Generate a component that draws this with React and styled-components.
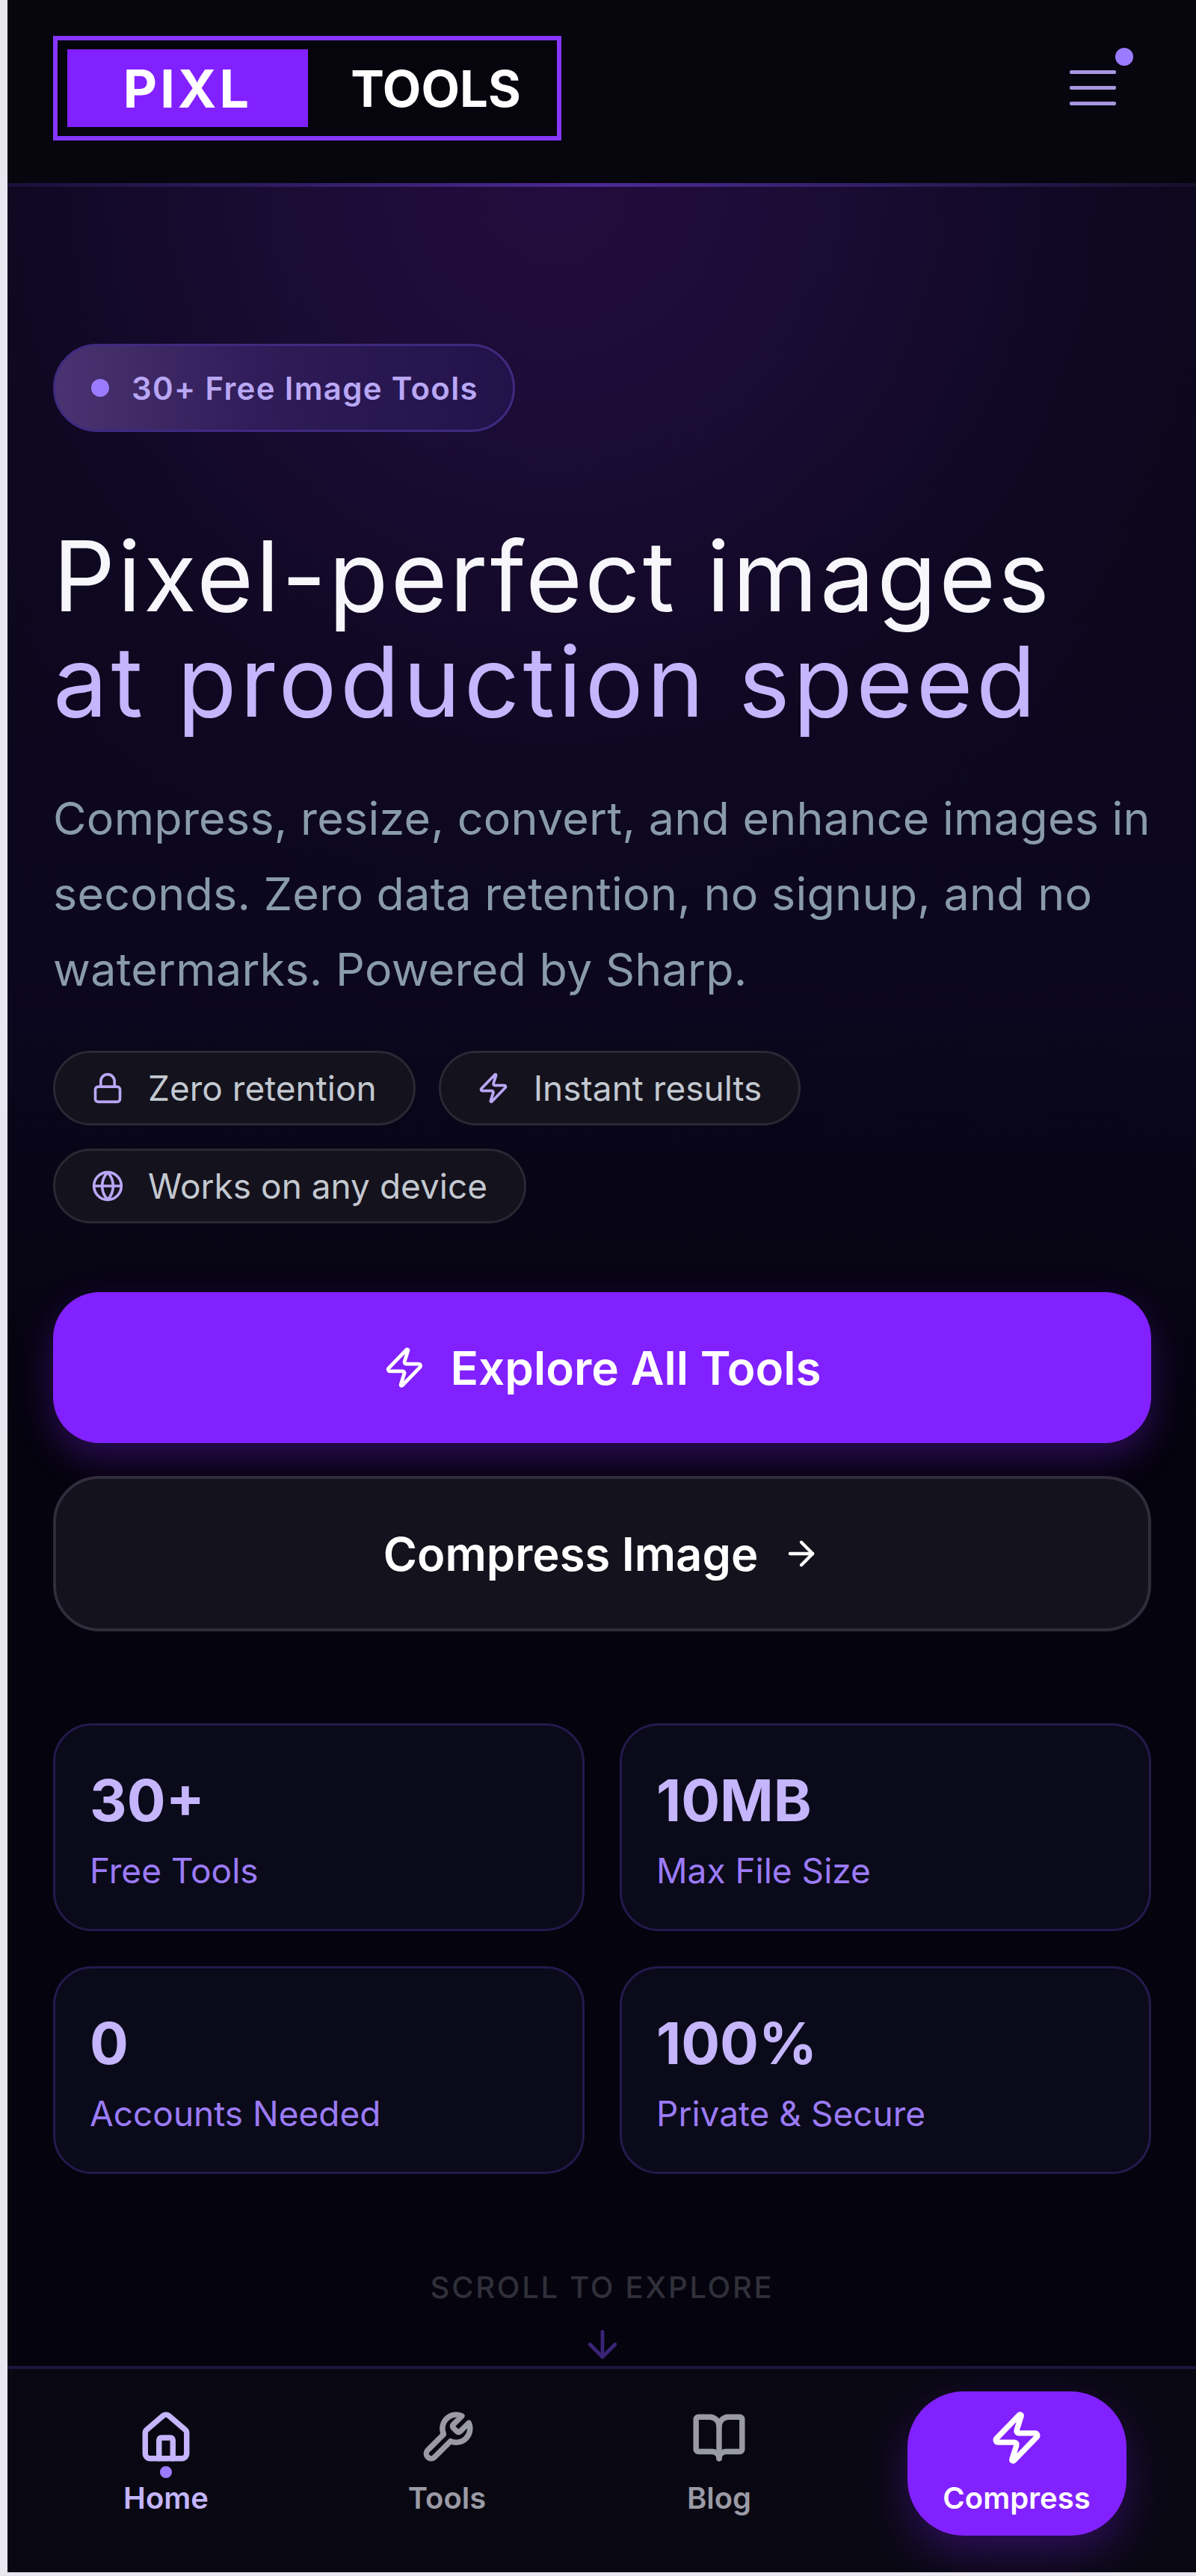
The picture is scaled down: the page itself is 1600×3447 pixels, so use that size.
import React from "react";
import styled, { createGlobalStyle } from "styled-components";
import { Lock, Zap, Globe, ArrowRight, ArrowDown, House, BookOpen } from "lucide-react";

const Global = createGlobalStyle`
  html, body { margin: 0; padding: 0; background: #e8e6ef; }
  * { box-sizing: border-box; }
  body { font-family: Inter, "Liberation Sans", sans-serif; }
`;

const Shell = styled.div`
  margin-left: 10px;
  width: 1590px;
  height: 3442px;
  display: flex;
  flex-direction: column;
  background: #05030d;
  overflow: hidden;
`;

const Header = styled.header`
  height: 250px;
  flex: none;
  background: #07060f;
  display: flex;
  align-items: flex-start;
  justify-content: space-between;
  padding: 48px 107px 0 61px;
  border-bottom: 5px solid;
  border-image: linear-gradient(90deg, #1a1038 0%, #4c2a96 50%, #14102a 100%) 1;
`;

const Logo = styled.div`
  width: 680px;
  height: 140px;
  border: 6px solid #8636ff;
  background: #06050e;
  padding: 12px 13px;
  display: flex;
  align-items: stretch;
  font-weight: 700;
  color: #fff;
`;

const LogoMark = styled.div`
  width: 322px;
  background: #8221ff;
  display: flex;
  align-items: center;
  justify-content: center;
  font-size: 70px;
  letter-spacing: 4px;
`;

const LogoWord = styled.div`
  flex: 1;
  display: flex;
  align-items: center;
  justify-content: center;
  padding-left: 22px;
  font-size: 67px;
`;

const Burger = styled.button`
  position: relative;
  width: 62px;
  margin-top: 46px;
  padding: 0;
  border: 0;
  background: none;
  display: flex;
  flex-direction: column;
  gap: 16px;
`;

const BurgerLine = styled.span`
  display: block;
  height: 5px;
  border-radius: 2px;
  background: #a896e0;
`;

const BurgerDot = styled.span`
  position: absolute;
  top: -30px;
  right: -23px;
  width: 24px;
  height: 24px;
  border-radius: 50%;
  background: #9b7bff;
`;

const Main = styled.main`
  flex: 1;
  min-height: 0;
  overflow: hidden;
  padding: 210px 60px 0 61px;
  background:
    radial-gradient(ellipse 1000px 1000px at 46% 0, #230c3e 0%, #1b0c35 35%, #100824 70%, rgba(12, 7, 28, 0) 100%),
    linear-gradient(180deg, #0c0718 0%, #0c0720 35%, #05030d 58%, #05030d 100%);
`;

const Badge = styled.div`
  width: 618px;
  height: 118px;
  border-radius: 59px;
  border: 3px solid #3f2a80;
  background: linear-gradient(90deg, #4a3370 0%, #2f1c58 45%, #23124a 100%);
  display: flex;
  align-items: center;
  padding-left: 48px;
  gap: 30px;
  color: #b9a7f5;
  font-size: 42px;
  font-weight: 600;
  letter-spacing: 1.3px;
`;

const BadgeDot = styled.span`
  width: 24px;
  height: 24px;
  border-radius: 50%;
  background: #9b7bff;
`;

const Title = styled.h1`
  margin: 122px 0 0;
  font-size: 130px;
  line-height: 141px;
  font-weight: 400;
  letter-spacing: 3.2px;
  color: #f7f6fb;
`;

const TitleAccent = styled.span`
  display: block;
  letter-spacing: 4.6px;
  color: #c4b5fd;
`;

const Lead = styled.p`
  margin: 63px 0 0;
  font-size: 61px;
  line-height: 101px;
  letter-spacing: 0.25px;
  color: #8a9bab;
  width: 1480px;
`;

const Chips = styled.div`
  margin-top: 58px;
  display: flex;
  flex-wrap: wrap;
  gap: 31px 31px;
`;

const Chip = styled.div`
  height: 100px;
  border-radius: 50px;
  border: 3px solid #2a2833;
  background: #14121c;
  display: flex;
  align-items: center;
  gap: 32px;
  padding: 0 49px 0 48px;
  font-size: 46px;
  color: #c3c8d0;
  svg { color: #b9a7f5; flex: none; }
`;

const Primary = styled.button`
  display: flex;
  width: 1469px;
  height: 202px;
  margin-top: 92px;
  border: 0;
  border-radius: 62px;
  background: #8221ff;
  color: #fff;
  align-items: center;
  justify-content: center;
  gap: 32px;
  font: 600 62px Inter, sans-serif;
  box-shadow: 0 20px 50px rgba(130, 33, 255, 0.3);
`;

const Secondary = styled.button`
  display: flex;
  width: 1469px;
  height: 208px;
  margin-top: 44px;
  border: 4px solid #2f2c3b;
  border-radius: 62px;
  background: #14121c;
  color: #fff;
  align-items: center;
  justify-content: center;
  gap: 32px;
  font: 600 61.5px Inter, sans-serif;
`;

const Stats = styled.div`
  margin-top: 123px;
  display: grid;
  grid-template-columns: 711px 711px;
  gap: 47px;
`;

const Stat = styled.div`
  height: 278px;
  border: 3px solid #241a4d;
  border-radius: 52px;
  background: #0b0a1a;
  padding: 55px 46px 0;
`;

const StatValue = styled.div`
  font-size: 77px;
  line-height: 90px;
  font-weight: 700;
  color: #c4b5fd;
`;

const StatLabel = styled.div`
  margin-top: 21px;
  font-size: 46px;
  line-height: 56px;
  color: #9b7bf7;
`;

const Scroll = styled.div`
  margin-top: 129px;
  display: flex;
  flex-direction: column;
  align-items: center;
  gap: 24px;
  font-size: 40px;
  font-weight: 500;
  line-height: 46px;
  letter-spacing: 2.7px;
  color: #30303a;
  svg { color: #3a2478; flex: none; }
`;

const Nav = styled.nav`
  flex: none;
  height: 276px;
  border-top: 4px solid #1f1640;
  background: #090812;
  display: grid;
  grid-template-columns: 376px 376px 352px 444px;
  padding-left: 24px;
`;

const NavCell = styled.div`
  display: flex;
  justify-content: center;
  align-items: flex-start;
  padding-top: 30px;
`;

const NavItem = styled.a`
  position: relative;
  width: ${p => (p.$cta ? "293px" : "auto")};
  height: 193px;
  padding-top: 25px;
  display: flex;
  flex-direction: column;
  align-items: center;
  border-radius: 75px;
  font-size: 40px;
  line-height: 48px;
  font-weight: 600;
  color: ${p => (p.$cta ? "#fff" : p.$active ? "#c4b5fd" : "#9a9aa5")};
  background: ${p => (p.$cta ? "#8221ff" : "transparent")};
  box-shadow: ${p => (p.$cta ? "0 24px 60px rgba(130, 33, 255, 0.3)" : "none")};
`;

const NavLabel = styled.span`
  margin-top: 20px;
`;

const NavDot = styled.span`
  position: absolute;
  top: 100px;
  left: 50%;
  width: 16px;
  height: 16px;
  margin-left: -8px;
  border-radius: 50%;
  background: #9b7bff;
`;

const WrenchIcon = () => (
  <svg width="74" height="74" viewBox="0 0 24 24" fill="none" stroke="currentColor" strokeWidth="2.4" strokeLinecap="round" strokeLinejoin="round">
    <path d="M14.7 6.3a1 1 0 0 0 0 1.4l1.6 1.6a1 1 0 0 0 1.4 0l3.77-3.77a6 6 0 0 1-7.94 7.94l-6.91 6.91a2.12 2.12 0 0 1-3-3l6.91-6.91a6 6 0 0 1 7.94-7.94l-3.76 3.76z" />
  </svg>
);

const stats = [
  ["30+", "Free Tools"],
  ["10MB", "Max File Size"],
  ["0", "Accounts Needed"],
  ["100%", "Private & Secure"],
];

export default function App() {
  return (
    <>
      <Global />
      <Shell>
        <Header>
          <Logo>
            <LogoMark>PIXL</LogoMark>
            <LogoWord>TOOLS</LogoWord>
          </Logo>
          <Burger aria-label="Menu">
            <BurgerDot />
            <BurgerLine />
            <BurgerLine />
            <BurgerLine />
          </Burger>
        </Header>
        <Main>
          <Badge>
            <BadgeDot />
            30+ Free Image Tools
          </Badge>
          <Title>
            Pixel-perfect images
            <TitleAccent>at production speed</TitleAccent>
          </Title>
          <Lead>
            Compress, resize, convert, and enhance images in seconds. Zero data retention, no signup, and no watermarks. Powered by Sharp.
          </Lead>
          <Chips>
            <Chip><Lock size={44} />Zero retention</Chip>
            <Chip><Zap size={44} />Instant results</Chip>
            <Chip><Globe size={44} />Works on any device</Chip>
          </Chips>
          <Primary><Zap size={58} />Explore All Tools</Primary>
          <Secondary>Compress Image<ArrowRight size={52} /></Secondary>
          <Stats>
            {stats.map(([v, l]) => (
              <Stat key={l}>
                <StatValue>{v}</StatValue>
                <StatLabel>{l}</StatLabel>
              </Stat>
            ))}
          </Stats>
          <Scroll>
            SCROLL TO EXPLORE
            <ArrowDown size={58} />
          </Scroll>
        </Main>
        <Nav>
          <NavCell><NavItem $active><House size={74} strokeWidth={2.4} /><NavDot /><NavLabel>Home</NavLabel></NavItem></NavCell>
          <NavCell><NavItem><WrenchIcon /><NavLabel>Tools</NavLabel></NavItem></NavCell>
          <NavCell><NavItem><BookOpen size={74} strokeWidth={2.4} /><NavLabel>Blog</NavLabel></NavItem></NavCell>
          <NavCell><NavItem $cta><Zap size={74} strokeWidth={2.4} /><NavLabel>Compress</NavLabel></NavItem></NavCell>
        </Nav>
      </Shell>
    </>
  );
}
